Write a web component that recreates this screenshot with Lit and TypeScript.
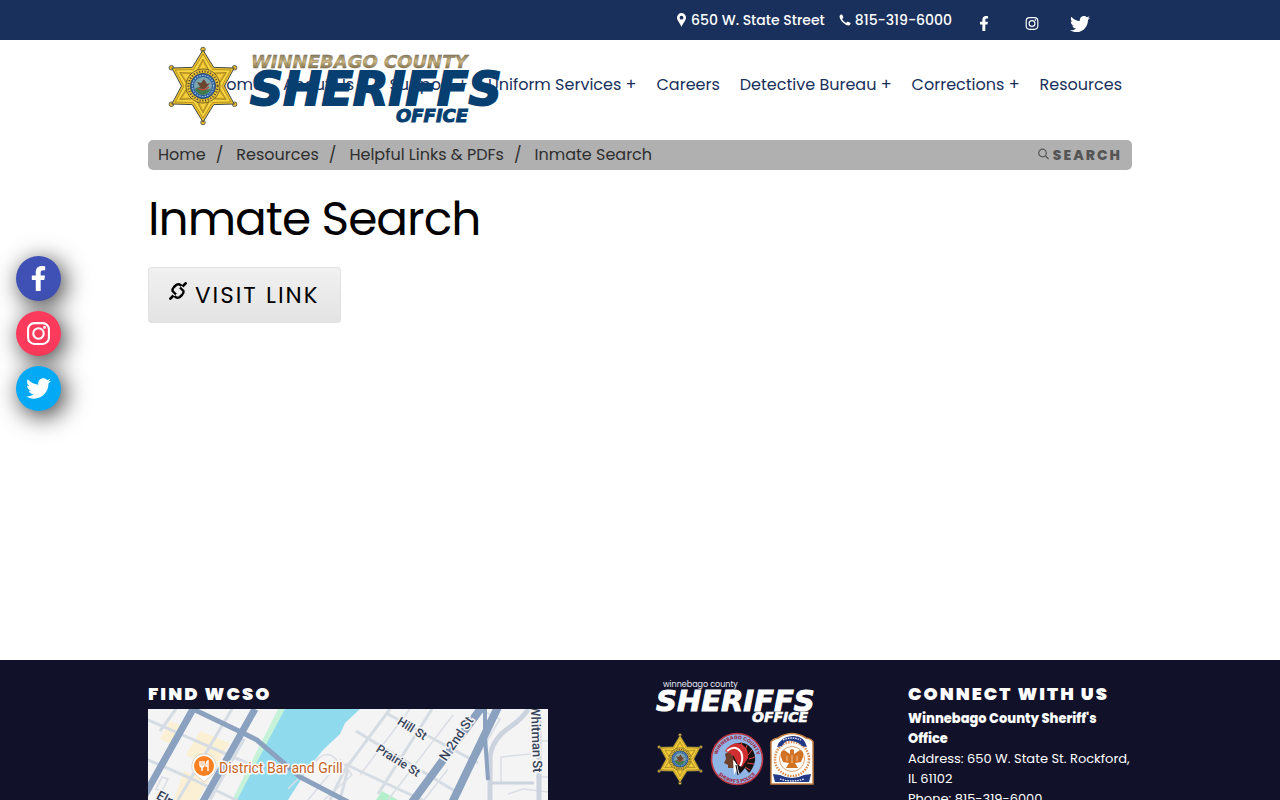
import { LitElement, html, css, svg } from "lit";
import { customElement } from "lit/decorators.js";

const FACEBOOK = svg`<path fill="currentColor" d="M279.14 288l14.22-92.66h-88.91v-60.13c0-25.35 12.42-50.06 52.24-50.06h40.42V6.26S260.43 0 225.36 0c-73.22 0-121.08 44.38-121.08 124.72v70.62H22.89V288h81.39v224h100.17V288z"/>`;
const TWITTER = svg`<path fill="currentColor" d="M459.37 151.716c.325 4.548.325 9.097.325 13.645 0 138.72-105.583 298.558-298.558 298.558-59.452 0-114.68-17.219-161.137-47.106 8.447.974 16.568 1.299 25.34 1.299 49.055 0 94.213-16.568 130.274-44.832-46.132-.975-84.792-31.188-98.112-72.772 6.498.974 12.995 1.624 19.818 1.624 9.421 0 18.843-1.3 27.614-3.573-48.081-9.747-84.143-51.98-84.143-102.985v-1.299c13.969 7.797 30.214 12.67 47.431 13.319-28.264-18.843-46.781-51.005-46.781-87.391 0-19.492 5.197-37.36 14.294-52.954 51.655 63.675 129.3 105.258 216.365 109.807-1.624-7.797-2.599-15.918-2.599-24.04 0-57.828 46.782-104.934 104.934-104.934 30.213 0 57.502 12.67 76.67 33.137 23.715-4.548 46.456-13.32 66.599-25.34-7.798 24.366-24.366 44.833-46.132 57.827 21.117-2.273 41.584-8.122 60.426-16.243-14.292 20.791-32.161 39.308-52.628 54.253z"/>`;
const INSTAGRAM = svg`<g fill="none" stroke="currentColor" stroke-width="2"><rect x="2" y="2" width="20" height="20" rx="6"/><circle cx="12" cy="12" r="5"/></g><circle cx="17.8" cy="6.2" r="1.4" fill="currentColor"/>`;

const SOCIAL = [
  { key: "facebook", label: "Facebook", box: "0 0 320 512", glyph: FACEBOOK },
  { key: "instagram", label: "Instagram", box: "0 0 24 24", glyph: INSTAGRAM },
  { key: "twitter", label: "Twitter", box: "0 0 512 512", glyph: TWITTER },
];

const NAV = ["Home", "About Us +", "Support +", "Uniform Services +", "Careers", "Detective Bureau +", "Corrections +", "Resources"];
const CRUMBS = ["Home", "Resources", "Helpful Links & PDFs", "Inmate Search"];

/* Six-pointed sheriff star, centred on 0,0 with tips 36 units out. */
const TIPS = [0, 60, 120, 180, 240, 300];
const point = (deg: number, r: number) => {
  const a = ((deg - 90) * Math.PI) / 180;
  return `${(Math.cos(a) * r).toFixed(2)},${(Math.sin(a) * r).toFixed(2)}`;
};
const outline = (outer: number, inner: number) =>
  TIPS.map((d) => `${point(d, outer)} ${point(d + 30, inner)}`).join(" ");

const star = svg`
  ${TIPS.map((d) => svg`<circle cx=${point(d, 36.5).split(",")[0]} cy=${point(d, 36.5).split(",")[1]} r="2.3" fill="#e8b92c" stroke="#3f4a4a" stroke-width=".8"/>`)}
  <polygon points=${outline(36, 21.5)} fill="#efc02b" stroke="#3f4a4a" stroke-width="1"/>
  <polygon points=${outline(32, 19)} fill="#f8d53c" stroke="#8a6c1c" stroke-width=".6"/>
  ${TIPS.map((d) => svg`<polygon points="${point(d, 27)} ${point(d + 20, 17)} ${point(d - 20, 17)}" fill="#d2a526" stroke="#6d581f" stroke-width=".5"/><polygon points="${point(d, 24)} ${point(d + 12, 17)} ${point(d - 12, 17)}" fill="#f4cf3c"/>`)}
  <circle r="17" fill="#edc234" stroke="#5b4e22" stroke-width=".8"/>
  <circle r="14.6" fill="none" stroke="#4f4a2a" stroke-width="2" stroke-dasharray="1.2 1.6"/>
  <circle r="12.6" fill="#2d5f9d" stroke="#27405f" stroke-width=".8"/>
  <circle r="10.6" fill="none" stroke="#9dbfdd" stroke-width="1.2" stroke-dasharray="1.5 1.2"/>
  <circle r="9" fill="#7ba6ad"/>
  <path d="M-8 3Q-3-1 1 2T8 2Q6 8 0 9Q-6 8-8 3z" fill="#3e7a4a"/>
  <path d="M-6-4L-2-3 1-7 4-2 7-3 3 2 0 4-3 1z" fill="#6b4630"/>
  <path d="M-5 2Q0 6 6 1" fill="none" stroke="#c34b3b" stroke-width="1.4"/>`;

@customElement("app-root")
export class AppRoot extends LitElement {
  static styles = css`
    :host {
      display: flex;
      flex-direction: column;
      min-height: 100vh;
      background: #fff;
      color: #000;
      font-family: Poppins, Inter, sans-serif;
      font-size: 16px;
    }
    * { box-sizing: border-box; }
    a { color: inherit; text-decoration: none; }
    svg { display: block; }
    .wrap { width: 100%; max-width: 1024px; margin: 0 auto; padding: 0 20px; }
    .topbar { background: #19305c; color: #fff; }
    .topbar .wrap { display: flex; justify-content: flex-end; align-items: center; height: 40px; font-size: 14px; font-weight: 500; }
    .contacts { display: flex; gap: 14px; }
    .contact { display: flex; align-items: center; gap: 4px; }
    .top-social { display: flex; align-items: center; padding: 7px 28px 0 8px; }
    .top-social a { display: grid; place-items: center; width: 48px; height: 20px; }
    .top-social svg { width: 14px; height: 15px; }
    .top-social .twitter svg { width: 20px; height: 20px; }
    .header { position: relative; display: flex; align-items: center; justify-content: flex-end; height: 100px; padding: 0 30px; }
    .logo { position: absolute; left: 40px; top: 6px; z-index: 1; }
    .brand { font-family: "DejaVu Sans", sans-serif; font-weight: bold; font-style: italic; }
    .nav { display: flex; gap: 20px; margin-top: -10px; color: #19305c; white-space: nowrap; line-height: 24px; }
    .crumbs { display: flex; justify-content: space-between; align-items: center; height: 30px; padding: 0 10px; border-radius: 5px; background: #b0b0b0; color: #2e2e2e; }
    .trail { display: flex; margin: 0; padding: 0; list-style: none; line-height: 24px; }
    .trail li + li::before { content: "/"; margin: 0 13px 0 10px; }
    .search { display: flex; align-items: center; gap: 4px; padding: 0; border: 0; background: none; color: #555; font: 800 14px/20px Poppins, Inter, sans-serif; letter-spacing: 2px; }
    .main { flex: 1 0 auto; min-height: 520px; }
    .title { margin: 20px 0; font-size: 47px; font-weight: 400; line-height: 57px; letter-spacing: -1px; }
    .visit { display: inline-flex; align-items: center; gap: 8px; height: 56px; padding: 0 20px; border: 1px solid #e2e2e2; border-radius: 3px; background: linear-gradient(#f1f1f1, #e3e3e3); font-size: 23px; letter-spacing: 2px; }
    .visit svg { margin-bottom: 8px; }
    .floating { position: fixed; left: 16px; top: 256px; display: grid; gap: 10px; }
    .floating a { display: grid; place-items: center; width: 45px; height: 45px; border-radius: 50%; color: #fff; box-shadow: 4px 5px 25px rgba(0, 0, 0, 0.8); }
    .floating svg { width: 25px; height: 25px; }
    .floating .facebook { background: #3f51b5; }
    .floating .instagram { background: #fc3b5c; }
    .floating .twitter { background: #03a9f4; }
    .footer { background: #11122a; color: #fff; font-size: 13px; line-height: 20px; }
    .footer .wrap { display: grid; grid-template-columns: 400px 1fr 224px; padding-top: 20px; padding-bottom: 20px; }
    .heading { margin: 0 0 2px; font-size: 18px; font-weight: 900; line-height: 27px; letter-spacing: 2px; white-space: nowrap; }
    .seals { display: grid; justify-content: center; align-content: start; padding-left: 14px; }
    .address { margin: 0; font-style: normal; }
    .address b { font-weight: 800; }
    .map { width: 100%; height: 300px; font-family: Roboto, sans-serif; }
    .street { font-size: 13px; font-weight: 500; fill: #36435a; stroke: #f5f4f5; stroke-width: 3px; paint-order: stroke; text-anchor: middle; }
    .small { font-size: 12px; }
    .place { font-size: 14px; fill: #c5631f; stroke: #fff; stroke-width: 3px; paint-order: stroke; }
  `;

  private social() {
    return SOCIAL.map((s) => html`<a class=${s.key} href="#" aria-label=${s.label}><svg viewBox=${s.box}>${s.glyph}</svg></a>`);
  }

  private logo() {
    return html`<svg width="336" height="80" viewBox="0 0 336 80" role="img" aria-label="Winnebago County Sheriffs Office">
      <defs><linearGradient id="gold" x1="0" y1="0" x2="0" y2="1"><stop offset=".1" stop-color="#726a55"/><stop offset=".5" stop-color="#cdb57c"/><stop offset=".9" stop-color="#6f6040"/></linearGradient></defs>
      <g transform="translate(35 40)">${star}</g>
      <g class="brand">
        <text x="83" y="22" font-size="18" fill="url(#gold)" stroke="#77705c" stroke-width=".4">WINNEBAGO COUNTY</text>
        <text x="82" y="59" font-size="46" fill="#063f70" stroke="#063f70" stroke-width="2">SHERIFFS</text>
        <text x="228" y="76" font-size="18" fill="#063f70" stroke="#063f70" stroke-width="1">OFFICE</text>
      </g></svg>`;
  }

  private map() {
    return html`<svg class="map" viewBox="0 0 400 300" preserveAspectRatio="xMinYMin slice" role="img" aria-label="Map">
      <rect width="400" height="300" fill="#f5f4f5"/>
      <g fill="#fbf0d4"><path d="M22 12L37 18 26 36 12 30z"/><path d="M52 22L82 34 66 60 38 46z"/><path d="M36 62L60 72 50 91H26z"/></g>
      <path d="M130 0H140L92 91H84L112 36z" fill="#c5f2d8"/>
      <path d="M137 0H212L197 14 192 25 175 41 159 61 140 91 60 240H-10L89 91 119 34z" fill="#90daee"/>
      <path d="M228 91L234 82 250 91z" fill="#b4efcb"/>
      <g fill="none" stroke="#d5dce3" stroke-width="3">
        <path d="M-2 10L30 24 92 51 116 62M-2 50L40 68 90 92M28 0L12 22M84 0L30 91M62 91L96 30"/>
        <path d="M242 0L196 62 182 91M284 0L230 85M238 4L330 54M197 55L250 80 275 91M208 22L310 84M312 84L322 52M192 91L200 60"/>
      </g>
      <g fill="none" stroke="#d9dee5" stroke-width="1.5">
        <path d="M262 0L212 66M305 6L240 91M300 60L276 91M330 0L352 10 326 54M140 80L172 48Q180 42 188 50L192 60M160 91L184 62M176 91L204 66 192 50M353 48L390 44V58M353 48V74M360 85L375 80 400 83M385 32H400M388 68H400M14 68L20 70 14 82 8 80z"/>
      </g>
      <g fill="none" stroke="#cbd4de" stroke-width="5">
        <path d="M382-2Q374 10 362 18Q344 30 342 48V300M391-2V300"/><path d="M344 74H386" stroke-width="3"/>
      </g>
      <g fill="none" stroke="#8aa1c0" stroke-width="7">
        <path d="M45 0L-6 91M107 0L53 96"/>
        <path d="M45 0L95 24 109 31 152 68 200 93" stroke-width="5"/>
        <path d="M334-2L262 96M350-2L303 96" stroke-width="8"/>
        <path d="M337-2V28L340 71" stroke-width="4"/>
      </g>
      <text class="street small" transform="translate(262 23) rotate(32)">Hill St</text>
      <text class="street small" transform="translate(248 55) rotate(32)">Prairie St</text>
      <text class="street" transform="translate(312 32) rotate(-56)">N 2nd St</text>
      <text class="street" transform="translate(384 30) rotate(88)">Whitman St</text>
      <text class="street" transform="translate(24 98) rotate(28)">Elm St</text>
      <path d="M56 45a12 12 0 0 1 8 21L56 73 48 66a12 12 0 0 1 8-21z" fill="#fff" stroke="#d2c8bd" stroke-width=".8"/>
      <circle cx="56" cy="57" r="10" fill="#fb8122"/>
      <path d="M52 52v4q0 2 2 2t2-2v-4M54 52v10M60 62v-10q-2 1-2 5h2" fill="none" stroke="#fff" stroke-width="1.4"/>
      <text class="place" x="71" y="64" stroke-linejoin="round">District Bar and Grill</text>
    </svg>`;
  }

  private seals() {
    return html`<svg width="162" height="106" viewBox="0 0 162 106" role="img" aria-label="Winnebago County Sheriffs Office seals">
      <defs>
        <path id="arc-top" d="M63 79a20 20 0 0 1 40 0"/>
        <path id="arc-bottom" d="M59 79a24 24 0 0 0 48 0"/>
      </defs>
      <text x="9" y="7" font-size="8" fill="#e6e8f2">winnebago county</text>
      <g class="brand" fill="#fff">
        <text x="2" y="31" font-size="29" stroke="#fff" stroke-width="1">SHERIFFS</text>
        <text x="98" y="42" font-size="14" stroke="#fff" stroke-width=".6">OFFICE</text>
      </g>
      <g transform="translate(26 79) scale(.66)">${star}</g>
      <circle cx="83" cy="79" r="25.500" fill="#8fb4e6" stroke="#c2343f" stroke-width="1.600"/>
      <g font-size="5" font-weight="700" fill="#a32c48" text-anchor="middle">
        <text><textPath href="#arc-top" startOffset="50%">WINNEBAGO COUNTY</textPath></text>
        <text><textPath href="#arc-bottom" startOffset="50%">SHERIFF'S POLICE</textPath></text>
      </g>
      <path d="M76 66Q86 60 94 65 102 71 101 81 99 89 95 93L91 88 86 94 82 86z" fill="#1a1212"/>
      <path d="M71 71Q78 61 87 64 95 68 94 78L88 87 83 84 79 76z" fill="#cf2f31"/>
      <path d="M73 71Q81 64 87 72 90 79 86 86" fill="none" stroke="#fff" stroke-width="2"/>
      <path d="M87 62L89 69M93 65L91 71M98 70L94 75M101 77L95 79M100 84L93 83M96 90L91 87" stroke="#d8433f" stroke-width="1"/>
      <path d="M71 74Q74 70 79 76L82 82 80 88 74 88 74 85 70 83 72 79z" fill="#70402b"/>
      <path d="M79 80L83 83 85 94 82 91 80 95z" fill="#fff"/>
      <path d="M79 76L83 84M82 85L84 95" stroke="#1a1212" stroke-width="1.200"/>
      <path d="M117 62Q119 59 124 58 138 49 152 58 158 59 159 62V104H117z" fill="#fff" stroke="#c9803f" stroke-width="1.500"/>
      <circle cx="138" cy="79" r="17" fill="none" stroke="#dc8b4c" stroke-width="2.500" stroke-dasharray="1.500 1.200"/>
      <circle cx="138" cy="79" r="12.500" fill="none" stroke="#e5a16b" stroke-width="1"/>
      <path d="M136 70L138 69 140 70 140 74 146 70 149 72 149 77 147 82 141 83 144 88H132L135 83 129 82 127 77 127 72 130 70 136 74z" fill="#d17225"/>
      <path d="M133 76V81M138 75V83M143 76V81" stroke="#f0c198" stroke-width="1"/>
      <path d="M123 67Q126 57 138 56T153 67L148 66Q145 62 138 61T128 66z" fill="#223a86"/>
      <path d="M119 94L126 95Q138 101 150 95L157 94 155 102H121z" fill="#223a86"/>
      <path d="M129 60Q138 56 147 60M126 99Q138 103 150 99" fill="none" stroke="#fff" stroke-width="1.300" stroke-dasharray="1.500 1"/>
    </svg>`;
  }

  render() {
    return html`
      <div class="topbar"><div class="wrap">
        <div class="contacts">
          <a class="contact" href="#"><svg width="11" height="14" viewBox="0 0 11 14"><path fill="#fff" fill-rule="evenodd" d="M5.500 0A4.600 4.600 0 0 1 10 4.700C10 7.500 7 10 5.500 14 4 10 1 7.500 1 4.700A4.600 4.600 0 0 1 5.500 0zm0 2.800a1.900 1.900 0 1 0 0 3.800 1.900 1.900 0 0 0 0-3.800z"/></svg>650 W. State Street</a>
          <a class="contact" href="#"><svg width="12" height="12" viewBox="0 0 12 12"><path fill="#fff" d="M2.600.6Q1.400.4.6 2q-.4 2.600 2.800 6t6.400 3.400q1.600-.4 1.800-1.600.1-.6-.5-1L9 7.700q-.6-.2-1 .2L7.200 9Q4.400 7.800 3.100 4.900l1-.9q.4-.4.2-1L3.400 1.100Q3.200.7 2.600.6z"/></svg>815-319-6000</a>
        </div>
        <div class="top-social">${this.social()}</div>
      </div></div>
      <header class="wrap header">
        <a class="logo" href="#">${this.logo()}</a>
        <nav class="nav">${NAV.map((n) => html`<a href="#">${n}</a>`)}</nav>
      </header>
      <main class="wrap main">
        <div class="crumbs">
          <ol class="trail">${CRUMBS.map((c) => html`<li><a href="#">${c}</a></li>`)}</ol>
          <button class="search" type="button"><svg width="11" height="14" viewBox="0 0 11 14"><g fill="none" stroke="#555" stroke-width="1.200"><circle cx="4.500" cy="5" r="3.800"/><path d="M7.300 7.800L10.600 11"/></g></svg>SEARCH</button>
        </div>
        <h1 class="title">Inmate Search</h1>
        <a class="visit" href="#"><svg width="18" height="18" viewBox="0 0 18 18"><g fill="none" stroke="#000" stroke-width="2.400"><path d="M7 12.500L3.500 9Q3 7 5 5L7.500 2.800Q9.500 1.500 11.500 3L12.500 4M11 5.500L14.500 9Q15 11 13 13L10.500 15.200Q8.500 16.500 6.500 15L5.500 14"/><path d="M13.500 4.500L17.500.5M4.500 13.500L.5 17.500" stroke-width="2.600"/></g></svg>VISIT LINK</a>
      </main>
      <footer class="footer"><div class="wrap">
        <section><h2 class="heading">FIND WCSO</h2>${this.map()}</section>
        <div class="seals">${this.seals()}</div>
        <section><h2 class="heading">CONNECT WITH US</h2>
          <address class="address"><b>Winnebago County Sheriff's Office</b><br>Address: 650 W. State St. Rockford, IL 61102<br>Phone: 815-319-6000</address></section>
      </div></footer>
      <aside class="floating" aria-label="Social media">${this.social()}</aside>`;
  }
}
